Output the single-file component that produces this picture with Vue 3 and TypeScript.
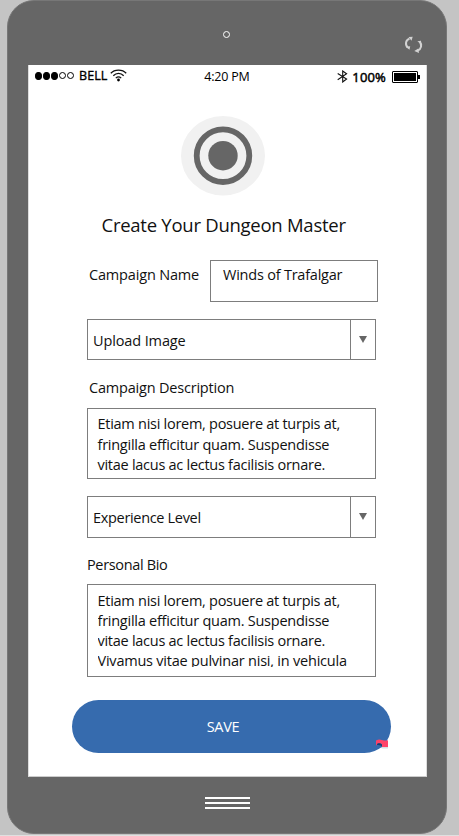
<script setup lang="ts">
import { ref } from 'vue'

const signal: boolean[] = [true, true, true, false, false]
const campaignName = ref('Winds of Trafalgar')
const description: string[] = [
  'Etiam nisi lorem, posuere at turpis at,',
  'fringilla efficitur quam. Suspendisse',
  'vitae lacus ac lectus facilisis ornare.',
]
const bio: string[] = [...description, 'Vivamus vitae pulvinar nisi, in vehicula']
</script>

<template>
  <div class="stage">
    <div class="device">
      <header class="bezel-top">
        <span class="camera"></span>
        <svg class="rotate" width="20" height="18" viewBox="0 0 20 18">
          <path d="M4 11.500C.8 9 1.500 3.800 5.500 2.700" />
          <path d="M15.500 5.500c2.800 3.200 2 7.500-1.900 9.200" />
          <path class="tip" d="M4.500.9 8.700.8 7.500 4.800ZM1.600 10.700l4.600-.5-.7 3.500ZM13.300 5.300l3.700-.5.3 3.200ZM10.300 15l4-2.600.7 4.700Z" />
        </svg>
      </header>

      <main class="screen">
        <div class="status">
          <div class="carrier">
            <span class="signal"><i v-for="(on, n) in signal" :key="n" :class="{ on }"></i></span>
            <span class="bell">BELL</span>
            <svg class="wifi" width="17" height="13" viewBox="0 0 17 13">
              <path d="M.8 4.300C4.500.1 12.500.1 16.200 4.300M3.300 6.700c3-3.100 7.400-3.100 10.400 0M5.800 9.100c1.700-1.600 3.700-1.600 5.400 0" />
              <circle cx="8.500" cy="11" r="1.400" />
            </svg>
          </div>
          <span class="clock">4:20 PM</span>
          <div class="power">
            <svg class="bluetooth" width="11" height="13" viewBox="0 0 11 13">
              <path d="M.7 3.500 9.600 9 5.700 12V1l3.900 2.800L.7 9.700" />
            </svg>
            <span class="percent">100%</span>
            <span class="battery"><i></i></span>
          </div>
        </div>

        <svg class="logo" width="84" height="80" viewBox="0 0 84 80">
          <ellipse cx="42" cy="39.700" rx="42" ry="39.700" fill="#f1f1f1" />
          <circle cx="42" cy="39.700" r="26.300" fill="none" stroke="#666" stroke-width="5.800" />
          <circle cx="42" cy="39.700" r="14.700" fill="#666" />
        </svg>
        <h1>Create Your Dungeon Master</h1>

        <form class="form" @submit.prevent>
          <div class="name-row">
            <span class="label name-label">Campaign Name</span>
            <div class="box name-box"><span>{{ campaignName }}</span></div>
          </div>

          <div class="box select">
            <span class="upload">Upload Image</span>
            <i class="arrow"></i>
          </div>

          <span class="label desc-label">Campaign Description</span>
          <div class="box area desc">
            <span v-for="(line, n) in description" :key="n" :class="'line-' + n">{{ line }}</span>
          </div>

          <div class="box select level">
            <span class="experience">Experience Level</span>
            <i class="arrow"></i>
          </div>

          <span class="label bio-label">Personal Bio</span>
          <div class="box area bio">
            <div class="clip">
              <span v-for="(line, n) in bio" :key="n" :class="'line-' + n">{{ line }}</span>
            </div>
          </div>

          <button class="save" type="submit">
            <span>SAVE</span>
            <svg class="flag" width="13" height="10" viewBox="0 0 13 10">
              <path d="M0 4h12v5.500H6L3 7Z" fill="#d8dfe4" />
              <path d="M0 1.500Q3-.3 6 1q3 1 6 .3V8H6Q5 5.500 1 6.200L0 7Z" fill="#ff4268" />
              <path d="M0 9.500Q0 5 2 4.500q2.500-.5 4 .8V8L3 9.500Z" fill="#366bae" />
              <path d="M1.500 4.500Q4 3.500 6 5.500v2Q4.500 5.500 1 6Z" fill="#173d70" />
            </svg>
          </button>
        </form>
      </main>

      <footer class="bezel-bottom"><i></i><i></i><i></i></footer>
    </div>
  </div>
</template>

<style>
body { margin: 0; background: #c4c4c4; }
</style>

<style scoped>
* { box-sizing: border-box; }
.stage {
  height: 836px; padding-left: 7px; background: #c4c4c4; overflow: hidden;
  border-bottom: 1px solid #e0e0e0;
  font: 14.5px/20px "Open Sans", "Noto Sans", sans-serif; color: #111;
}
.device {
  width: 440px; height: 834px; padding: 0 19px 0 20px;
  border: 1px solid #777; border-radius: 27px; background: #666;
  display: flex; flex-direction: column;
}
.bezel-top { height: 64px; flex: none; position: relative; }
.camera {
  position: absolute; left: 195px; top: 30px; width: 7px; height: 7px;
  border: 1.500px solid #fff; border-radius: 50%;
}
.rotate { position: absolute; left: 376px; top: 35px; }
.rotate path { fill: none; stroke: #d2d2d2; stroke-width: 2; }
.rotate .tip { fill: #d2d2d2; stroke: none; }
.screen {
  width: 399px; height: 712px; flex: none; background: #fff;
  border-bottom: 1px solid #ccc; border-left: 1px solid #ddd; border-right: 1px solid #ddd;
  display: flex; flex-direction: column;
}
.status {
  height: 22px; flex: none; display: grid; grid-template-columns: 1fr auto 1fr;
  align-items: center; padding: 0 5px 0 6px; color: #000;
}
.carrier, .power { display: flex; align-items: center; }
.signal { display: flex; gap: 1px; }
.signal i { width: 7px; height: 8px; border: 1px solid #000; border-radius: 50%; }
.signal i:not(.on) { height: 7px; }
.signal .on { background: #000; }
.bell { margin-left: 5px; font-size: 12.500px; line-height: 20px; -webkit-text-stroke: .35px #000; letter-spacing: .1px; }
.wifi { margin-left: 3px; margin-top: -2px; }
.wifi path { fill: none; stroke: #111; stroke-width: 1.3; }
.clock { font-size: 12.500px; letter-spacing: -.2px; padding-top: 2px; position: relative; left: -1px; }
.power { justify-content: flex-end; padding-top: 1px; }
.bluetooth path { fill: none; stroke: #111; stroke-width: 1.100; }
.percent { margin: 0 6px 0 4px; font-size: 13px; letter-spacing: .15px; -webkit-text-stroke: .5px #000; }
.battery { width: 26px; height: 12px; border: 1px solid #000; border-radius: 1px; padding: 1px; position: relative; margin-right: 3px; }
.battery i { display: block; height: 8px; background: #000; }
.battery::after { content: ""; position: absolute; left: 25px; top: 3px; width: 2px; height: 4px; background: #000; }
.logo { margin: 29px 0 0 152px; flex: none; }
h1 {
  margin: 14px 0 0 72.500px; font-size: 18.500px; line-height: 30px; height: 30px; font-weight: 400;
  white-space: nowrap; letter-spacing: -.26px;
}
.form { display: flex; flex-direction: column; margin-left: 58px; padding-top: 20px; width: 305px; }
.form span { white-space: nowrap; }
.box { border: 1px solid #7d7d7d; background: #fff; width: 289px; flex: none; }
.name-row { display: flex; height: 42px; }
.name-label { width: 121px; margin-left: 2px; margin-top: 5px; letter-spacing: -.17px; }
.name-box { width: 168px; padding: 4px 12px; letter-spacing: -.22px; }
.select { height: 41px; margin-top: 17px; display: flex; align-items: center; justify-content: space-between; padding-left: 5px; }
.select span { padding-top: 2px; }
.upload { letter-spacing: -.12px; }
.experience { letter-spacing: -.32px; }
.arrow { width: 25px; height: 100%; border-left: 1px solid #7d7d7d; display: flex; justify-content: center; padding-top: 16px; }
.arrow::after { content: ""; width: 0; height: 0; border: 4.500px solid transparent; border-top: 7px solid #666; border-bottom: 0; }
.label { line-height: 20px; }
.desc-label { margin: 18px 0 10px 2px; letter-spacing: -.2px; }
.area { display: flex; flex-direction: column; align-items: flex-start; padding-left: 9.500px; }
.line-0 { letter-spacing: -.27px; }
.line-1 { letter-spacing: -.25px; }
.line-2 { letter-spacing: -.27px; }
.line-3 { letter-spacing: -.22px; }
.desc { height: 71px; padding-top: 5px; line-height: 20.500px; }
.level { height: 42px; }
.bio-label { margin: 17px 0 9px; letter-spacing: -.35px; }
.bio { height: 93px; padding-top: 6px; }
.clip { height: 76px; overflow: hidden; display: flex; flex-direction: column; align-items: flex-start; }
.save {
  position: relative; width: 319px; height: 53px; margin: 23px 0 0 -15px; padding: 0 17px 0 0;
  border: 0; border-radius: 27px; background: #366bae; color: #fff; font: 14.500px/20px "Open Sans", sans-serif;
  letter-spacing: -.3px; flex: none;
}
.flag { position: absolute; left: 304px; top: 39px; }
.bezel-bottom { padding-top: 20px; display: flex; flex-direction: column; align-items: center; gap: 3px; }
.bezel-bottom i { width: 45px; height: 2px; background: #fff; }
</style>
